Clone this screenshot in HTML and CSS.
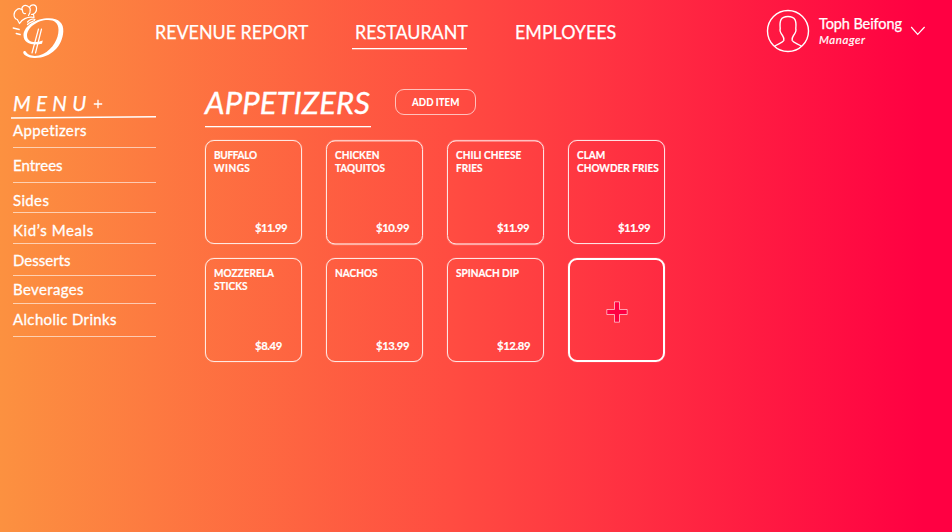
FILE: index.html
```html
<!DOCTYPE html>
<html lang="en">
<head>
<meta charset="utf-8">
<title>Restaurant Menu</title>
<link rel="stylesheet" href="styles.css">
</head>
<body>
<header class="topbar">
  <svg class="logo" width="54" height="56" viewBox="0 0 54 56" fill="none" stroke="#fff" stroke-linecap="round" stroke-linejoin="round">
    <path stroke-width="1.200" d="M7.500 20.500L5.300 16.500C1 15.500 1 9 5 6.500C7 5 9.500 5.800 10.500 7.500C8.500 3.500 12.500 1.500 15.500 3C17.500 4 18.800 6 18 8.500M17.500 4.500C19 1 24 1 24.500 5C25 8.500 22.500 11.500 19.500 11.500M7.500 20.500C9 17 15.500 13 22 14.500L21.500 11M15.500 19C18 16 21.500 15.500 23 16.500C23 18.500 18 18.500 15.500 21.500M10.500 7.500C10.500 10 12 11 13.500 10.500M16.500 12.500L18 9.500"/>
    <path stroke-width="1.300" d="M1.200 25L7.200 26.500M4.200 30.500L8.200 31.500"/>
    <path fill="#fff" stroke="none" d="M30.800 37.500L30 40.800C20 43 11.500 40 11.500 32.500C11.500 23 24 15.200 37 15.200C47 15.200 51.800 20.500 51.300 28.500C50.500 43 39 55.500 22 55C16 54.800 11.500 52 11.200 49.500C11.500 48 13 47.600 14 48.800C16 53 24 54.500 31 51C41 46 46.500 35.500 46.500 27C46.500 20 42.500 17 36 17C25 17 15 25 15 32.500C15 38.500 21 40 27.300 38.500Z"/>
    <path stroke-width="1.200" d="M26.500 26L20 50M29.500 26L23.500 50"/>
  </svg>
  <nav class="nav">
    <a class="nav-link revenue"><span>REVENUE REPORT</span></a>
    <a class="nav-link restaurant active"><span>RESTAURANT</span></a>
    <a class="nav-link employees"><span>EMPLOYEES</span></a>
  </nav>
  <div class="account">
    <svg class="avatar" width="44" height="44" viewBox="0 0 44 44" fill="none" stroke="#fff" stroke-width="1.400" stroke-linejoin="round">
      <circle cx="22" cy="22" r="20.500"/>
      <path d="M8.500 37.300C11 35 16.500 34 17.800 31.500C18.300 29.500 17.500 28 16.500 26.500C14.500 24 13.500 22 14.200 19.500C13.500 12 14.500 7.500 22 7.500C29.500 7.500 30.500 12 29.800 19.500C30.500 22 29.500 24 27.500 26.500C26.500 28 25.700 29.500 26.200 31.500C27.500 34 33 35 35.500 37.300"/>
    </svg>
    <div class="who">
      <div class="who-name">Toph Beifong</div>
      <div class="who-role">Manager</div>
    </div>
    <svg class="chevron" width="16" height="10" viewBox="0 0 16 10" fill="none" stroke="#fff" stroke-width="1.200"><path d="M1.200 1L7.700 8.300L14.600 1"/></svg>
  </div>
</header>
<div class="layout">
  <aside class="sidebar">
    <div class="menu-head"><span>MENU</span>
      <svg width="10" height="10" viewBox="0 0 10 10" stroke="#fff" stroke-width="1.300"><path d="M5 .8V9.200M.8 5H9.200"/></svg>
    </div>
    <svg class="menu-rule" width="146" height="3" viewBox="0 0 146 3"><path d="M0 1.900L145 .8" stroke="#fff" stroke-width="1.500"/></svg>
    <ul class="menu">
      <li class="m1">Appetizers</li>
      <li class="m2">Entrees</li>
      <li class="m3">Sides</li>
      <li class="m4">Kid’s Meals</li>
      <li class="m5">Desserts</li>
      <li class="m6">Beverages</li>
      <li class="m7">Alcholic Drinks</li>
    </ul>
  </aside>
  <main class="content">
    <div class="heading">
      <h1>APPETIZERS</h1>
      <button class="add"><span>ADD ITEM</span></button>
    </div>
    <div class="cards">
      <article class="card"><h2><span class="tight">BUFFALO</span><br><span class="loose">WINGS</span></h2><p>$11.99</p></article>
      <article class="card low"><h2>CHICKEN<br>TAQUITOS</h2><p class="wide">$10.99</p></article>
      <article class="card low"><h2>CHILI CHEESE<br>FRIES</h2><p>$11.99</p></article>
      <article class="card"><h2>CLAM<br>CHOWDER FRIES</h2><p>$11.99</p></article>
      <article class="card"><h2>MOZZERELA<br>STICKS</h2><p class="wide">$8.49</p></article>
      <article class="card"><h2>NACHOS</h2><p class="wide">$13.99</p></article>
      <article class="card"><h2>SPINACH DIP</h2><p class="wide">$12.89</p></article>
      <article class="card new">
        <svg width="22" height="22" viewBox="0 0 22 22"><path d="M8.500 .8H13.500V8.500H21.200V13.500H13.500V21.200H8.500V13.500H.8V8.500H8.500Z" fill="#ff0042" stroke="#fff" stroke-opacity=".75" stroke-width=".8"/></svg>
      </article>
    </div>
  </main>
</div>
</body>
</html>
```
FILE: styles.css
```css
*{box-sizing:border-box}
body{margin:0;width:952px;height:532px;overflow:hidden;color:#fff;font-family:Lato,"Open Sans",sans-serif;white-space:nowrap;background:linear-gradient(90deg,#fc9140 0%,#ff4b41 48%,#ff0042 97%)}
h1,h2,p,ul{margin:0;padding:0;font-weight:400}
.topbar{display:flex;height:62px}
.logo{margin:3px 0 0 12px}
.nav{display:flex;width:464px;margin-left:89px}
.nav-link{font-size:19px;line-height:24px;padding-top:19.500px;height:50px;-webkit-text-stroke:.25px #fff}
.nav-link span{display:inline-block;transform:scaleX(.94);transform-origin:0 50%}
.revenue{width:152px}
.restaurant{margin-left:45px;width:115px;padding-left:2.500px;border-bottom:1px solid #fff;box-shadow:0 1px 0 rgba(255,255,255,.3);height:49px}
.employees{margin-left:48px}
.account{display:flex;margin-left:147px}
.avatar{margin-top:9px}
.who{margin-left:9px;width:84px;padding-top:15px}
.who-name{font-size:14.500px;line-height:18px;letter-spacing:-.1px;-webkit-text-stroke:.25px #fff}
.who-role{font-size:11.500px;line-height:14px;font-style:italic;letter-spacing:.6px;-webkit-text-stroke:.2px #fff}
.chevron{margin:26px 0 0 7px}
.layout{display:flex}
.sidebar{width:146px;margin-left:11px;padding-top:30px}
.menu-head{display:flex;height:24px;line-height:23px;font-size:20.500px;font-style:italic;padding-left:2px;letter-spacing:5.300px;-webkit-text-stroke:.25px #fff}
.menu-head svg{margin:7px 0 0 5px}
.menu-head span{width:75px}
.menu-rule{display:block}
.menu{list-style:none;margin:0 1px 0 2px;font-size:15px;line-height:18px;letter-spacing:.35px;-webkit-text-stroke:.3px #fff}
.menu li{display:flex;align-items:flex-end;border-bottom:1px solid rgba(255,255,255,.6)}
.m1{height:29px;padding-bottom:8px}
.m2{height:35px;padding-bottom:8px}
.m2,.m5{letter-spacing:0}
.m3{height:30px;padding-bottom:3px}
.m4{height:31px;padding-bottom:4px;letter-spacing:.6px}
.m5{height:32px;padding-bottom:6.500px}
.m6{height:28px;padding-bottom:5px}
.m7{height:33px;padding-bottom:8px}
.content{margin-left:48px;padding-top:22px}
.heading{display:flex;height:56px}
h1{width:166px;height:42.500px;font-size:31px;line-height:36px;font-style:italic;letter-spacing:.1px;border-bottom:1px solid #fff;box-shadow:0 1px 0 rgba(255,255,255,.3);-webkit-text-stroke:.35px #fff}
.add{margin:5px 0 0 24px;width:81px;height:26px;padding:0;border:1px solid rgba(255,255,255,.65);border-radius:9px;background:none;color:#fff;font:900 10.500px/12px Lato,sans-serif}
.add span{display:inline-block;transform:scaleX(.92)}
.cards{display:grid;grid-template-columns:repeat(4,97px);grid-auto-rows:104px;gap:14px 24px}
.card{display:flex;flex-direction:column;justify-content:space-between;border:1px solid rgba(255,255,255,.85);box-shadow:0 0 1px rgba(255,255,255,.7);border-radius:9px;padding:6.500px 0 8px 7.500px}
h2{font-size:11.300px;line-height:13.500px;font-weight:700;transform:scaleX(.89);transform-origin:0 50%;-webkit-text-stroke:.2px #fff}
.tight{letter-spacing:-.35px}
.loose{letter-spacing:.5px}
.card p{font-size:11.300px;line-height:14px;font-weight:700;padding-left:41.500px;letter-spacing:-.6px;-webkit-text-stroke:.15px #fff}
.card .wide{letter-spacing:-.4px}
.low{transform:translateY(.4px)}
.new{border:2px solid #fff;align-items:center;justify-content:center;padding:3px 0 0}
```
